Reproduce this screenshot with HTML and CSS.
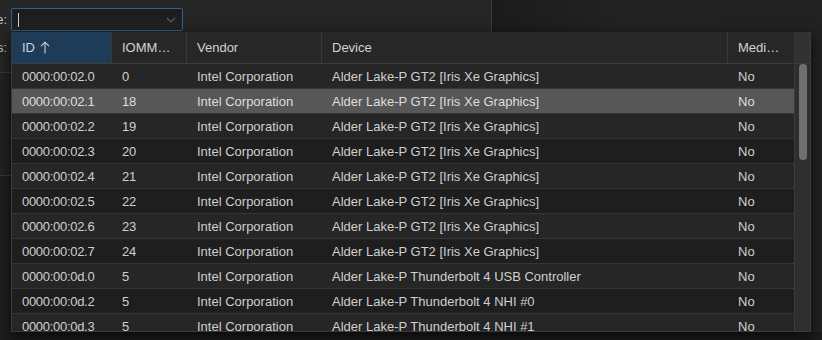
FILE: index.html
```html
<!DOCTYPE html>
<html lang="en">
<head>
  <meta charset="UTF-8" />
  <title>PCI device picker</title>
  <link rel="stylesheet" href="styles.css">
</head>
<body>
  <div class="window">
    <div class="pane-left">
      <div class="form">
        <label class="form-label">Type:</label>
        <div class="combo">
          <span class="caret"></span>
          <svg class="chevron" width="10" height="6" viewBox="0 0 10 6"><polyline points="1,1 5,5 9,1" fill="none" stroke="#5a5a5a" stroke-width="1.2"/></svg>
        </div>
        <label class="form-label">Devices:</label>
        <div class="form-field"></div>
      </div>
      <div class="section"></div>
      <div class="section section-lower"></div>
    </div>
    <div class="pane-right"></div>
  </div>

  <div class="popup">
    <div class="grid-wrap">
      <div class="head">
        <div class="hcell sorted">ID <svg class="sort-arrow" width="10" height="13" viewBox="0 0 10 13"><path d="M5 12.5V1.2M1 5.2L5 1.2L9 5.2" fill="none" stroke="#c9d4df" stroke-width="1.1"/></svg></div>
        <div class="hcell">IOMM…</div>
        <div class="hcell">Vendor</div>
        <div class="hcell">Device</div>
        <div class="hcell">Medi…</div>
      </div>
      <div class="rows">
        <div class="row"><span class="num">0000:00:02.0</span><span class="num">0</span><span>Intel Corporation</span><span>Alder Lake-P GT2 [Iris Xe Graphics]</span><span>No</span></div>
        <div class="row selected"><span class="num">0000:00:02.1</span><span class="num">18</span><span>Intel Corporation</span><span>Alder Lake-P GT2 [Iris Xe Graphics]</span><span>No</span></div>
        <div class="row"><span class="num">0000:00:02.2</span><span class="num">19</span><span>Intel Corporation</span><span>Alder Lake-P GT2 [Iris Xe Graphics]</span><span>No</span></div>
        <div class="row"><span class="num">0000:00:02.3</span><span class="num">20</span><span>Intel Corporation</span><span>Alder Lake-P GT2 [Iris Xe Graphics]</span><span>No</span></div>
        <div class="row"><span class="num">0000:00:02.4</span><span class="num">21</span><span>Intel Corporation</span><span>Alder Lake-P GT2 [Iris Xe Graphics]</span><span>No</span></div>
        <div class="row"><span class="num">0000:00:02.5</span><span class="num">22</span><span>Intel Corporation</span><span>Alder Lake-P GT2 [Iris Xe Graphics]</span><span>No</span></div>
        <div class="row"><span class="num">0000:00:02.6</span><span class="num">23</span><span>Intel Corporation</span><span>Alder Lake-P GT2 [Iris Xe Graphics]</span><span>No</span></div>
        <div class="row"><span class="num">0000:00:02.7</span><span class="num">24</span><span>Intel Corporation</span><span>Alder Lake-P GT2 [Iris Xe Graphics]</span><span>No</span></div>
        <div class="row"><span class="num">0000:00:0d.0</span><span class="num">5</span><span>Intel Corporation</span><span>Alder Lake-P Thunderbolt 4 USB Controller</span><span>No</span></div>
        <div class="row"><span class="num">0000:00:0d.2</span><span class="num">5</span><span>Intel Corporation</span><span>Alder Lake-P Thunderbolt 4 NHI #0</span><span>No</span></div>
        <div class="row"><span class="num">0000:00:0d.3</span><span class="num">5</span><span>Intel Corporation</span><span>Alder Lake-P Thunderbolt 4 NHI #1</span><span>No</span></div>
      </div>
    </div>
    <div class="vscroll">
      <div class="corner"></div>
      <div class="track"><div class="thumb"></div></div>
    </div>
  </div>
</body>
</html>
```

FILE: styles.css
```css
body {
  margin: 0;
  background: #1c1c1c;
  font-family: "Liberation Sans", Arial, sans-serif;
  font-size: 13px;
  color: #cfcfcf;
  overflow: hidden;
}

.window {
  display: grid;
  grid-template-columns: 492px 1fr;
  height: 332px;
}

.pane-left {
  background: #262626;
  border-right: 1px solid #3a3a3a;
}

.pane-right {
  background: linear-gradient(90deg, #1b1b1b, #232323 40%, #222222);
}

.form {
  display: grid;
  grid-template-columns: 7px 172px;
  column-gap: 4px;
  row-gap: 5px;
  padding-top: 8px;
}

.form-label {
  justify-self: end;
  align-self: center;
  white-space: nowrap;
  color: #c4c4c4;
}

.combo {
  position: relative;
  height: 23px;
  box-sizing: border-box;
  border: 1px solid #2c6394;
  border-radius: 2px;
  background: linear-gradient(#1c1c1c, #222222);
  display: flex;
  align-items: center;
  justify-content: space-between;
  padding: 0 6px;
}

.caret {
  width: 1px;
  height: 14px;
  background: #d0d0d0;
}

.form-field {
  height: 23px;
}

.section {
  margin-top: 13px;
  height: 102px;
  border-top: 1px solid #3a3a3a;
  background: #222222;
}

.section-lower {
  margin-top: 0;
  background: #1f1f1f;
  height: 160px;
}

/* dropdown table */
.popup {
  position: absolute;
  left: 11px;
  top: 32px;
  width: 800px;
  height: 300px;
  box-sizing: border-box;
  border: 1px solid #3a3a3a;
  border-top: none;
  background: #262626;
  display: flex;
  overflow: hidden;
  box-shadow: 0 4px 14px rgba(0, 0, 0, 0.75);
}

.grid-wrap {
  width: 782px;
}

.head, .row {
  display: grid;
  grid-template-columns: 100px 75px 135px 406px 66px;
}

.head {
  height: 32px;
  box-sizing: border-box;
  border-bottom: 1px solid #3e3e3e;
  background: #272727;
}

.hcell {
  display: flex;
  align-items: center;
  gap: 5px;
  padding-left: 10px;
  border-right: 1px solid #3a3a3a;
  color: #d2d2d2;
}

.hcell:last-child {
  border-right: none;
}

.hcell.sorted {
  background: #1e3b57;
  color: #c9d4df;
}

.sort-arrow {
  margin-top: -1px;
}

.row {
  height: 25px;
  box-sizing: border-box;
  border-bottom: 1px solid #363636;
  background: #262626;
  align-items: center;
}

.row:nth-child(even) {
  background: #1e1e1e;
}

.row.selected {
  background: #575757;
  color: #dedede;
}

.row span {
  padding-left: 10px;
  white-space: nowrap;
  overflow: hidden;
}

.row .num {
  letter-spacing: -0.3px;
}

.vscroll {
  width: 16px;
  border-left: 1px solid #3a3a3a;
  background: #2f2f2f;
}

.corner {
  height: 32px;
  box-sizing: border-box;
  border-bottom: 1px solid #3e3e3e;
  background: #323232;
}

.thumb {
  margin: 0 0 0 4px;
  width: 8px;
  height: 96px;
  border-radius: 4px;
  background: #6f6f6f;
}
```
